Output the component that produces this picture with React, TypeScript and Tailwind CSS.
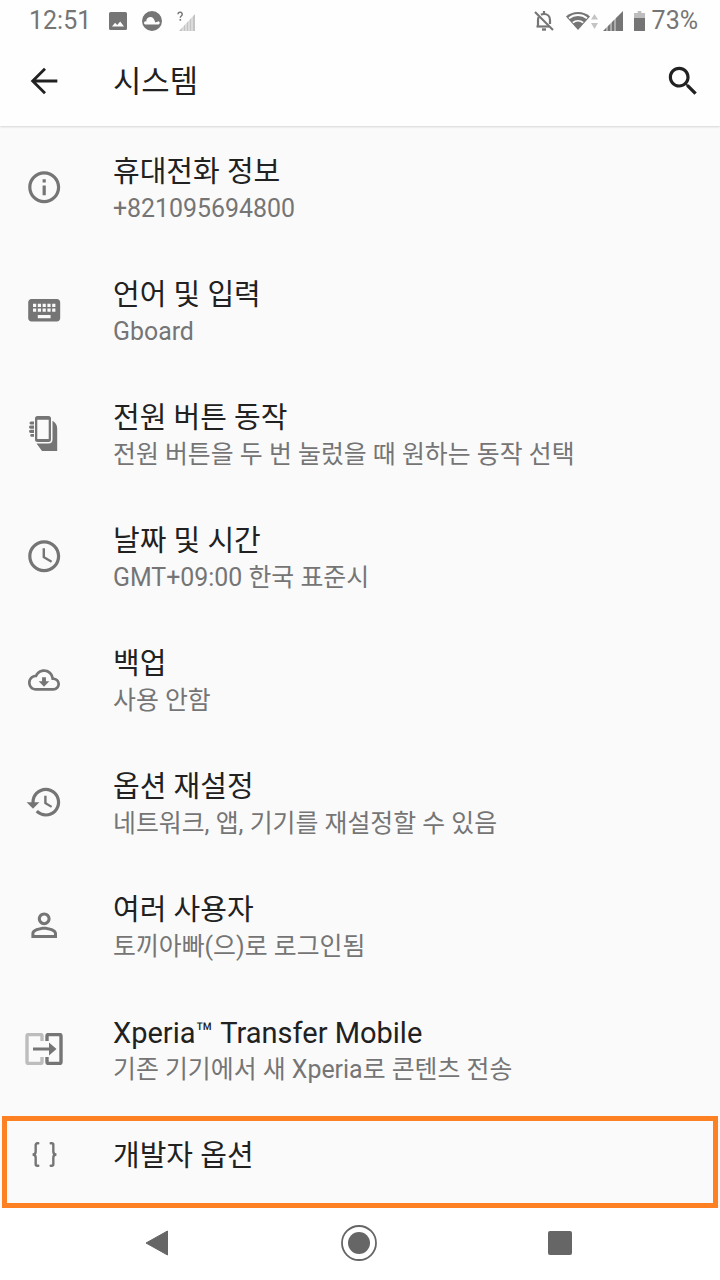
import React from "react";

const FONT = "font-['Roboto','Noto_Sans_CJK_KR',sans-serif]";

function Mi({ d, className = "w-[38.4px] h-[38.4px]" }: { d: string; className?: string }) {
  return (
    <svg viewBox="0 0 24 24" className={className} fill="currentColor">
      <path d={d} />
    </svg>
  );
}

const INFO = "M11 7h2v2h-2zm0 4h2v6h-2zm1-9C6.48 2 2 6.48 2 12s4.48 10 10 10 10-4.48 10-10S17.52 2 12 2zm0 18c-4.41 0-8-3.59-8-8s3.59-8 8-8 8 3.59 8 8-3.59 8-8 8z";
const KEYBOARD = "M20 5H4c-1.1 0-1.99.9-1.99 2L2 17c0 1.1.9 2 2 2h16c1.1 0 2-.9 2-2V7c0-1.1-.9-2-2-2zm-9 3h2v2h-2V8zm0 3h2v2h-2v-2zM8 8h2v2H8V8zm0 3h2v2H8v-2zm-1 2H5v-2h2v2zm0-3H5V8h2v2zm9 7H8v-2h8v2zm0-4h-2v-2h2v2zm0-3h-2V8h2v2zm3 3h-2v-2h2v2zm0-3h-2V8h2v2z";
const CLOCK = "M11.99 2C6.47 2 2 6.48 2 12s4.47 10 9.99 10C17.52 22 22 17.52 22 12S17.52 2 11.99 2zM12 20c-4.42 0-8-3.58-8-8s3.58-8 8-8 8 3.58 8 8-3.58 8-8 8zm.5-13H11v6l5.25 3.15.75-1.23-4.5-2.67V7z";
const CLOUD = "M19.35 10.04C18.67 6.59 15.64 4 12 4 9.11 4 6.6 5.64 5.35 8.04 2.34 8.36 0 10.91 0 14c0 3.31 2.69 6 6 6h13c2.76 0 5-2.24 5-5 0-2.64-2.05-4.78-4.65-4.96zM19 18H6c-2.21 0-4-1.79-4-4 0-2.05 1.53-3.76 3.56-3.97l1.07-.11.5-.95C8.08 7.14 9.94 6 12 6c2.62 0 4.88 1.86 5.39 4.43l.3 1.5 1.53.11c1.56.1 2.78 1.41 2.78 2.96 0 1.65-1.35 3-3 3zm-5.55-8h-2.9v3H8l4 4 4-4h-2.55z";
const HISTORY = "M13 3c-4.97 0-9 4.03-9 9H1l3.89 3.89.07.14L9 12H6c0-3.87 3.13-7 7-7s7 3.13 7 7-3.13 7-7 7c-1.93 0-3.68-.79-4.94-2.06l-1.42 1.42C8.27 19.99 10.51 21 13 21c4.97 0 9-4.03 9-9s-4.03-9-9-9zm-1 5v5l4.28 2.54.72-1.21-3.5-2.08V8H12z";
const PERSON = "M12 5.9c1.16 0 2.1.94 2.1 2.1s-.94 2.1-2.1 2.1S9.9 9.16 9.9 8s.94-2.1 2.1-2.1m0 9c2.97 0 6.1 1.46 6.1 2.1v1.1H5.9V17c0-.64 3.13-2.1 6.1-2.1M12 4C9.79 4 8 5.79 8 8s1.79 4 4 4 4-1.79 4-4-1.79-4-4-4zm0 9c-2.67 0-8 1.34-8 4v3h16v-3c0-2.66-5.33-4-8-4z";

function HandPhone() {
  return (
    <svg viewBox="0 0 30 36" className="w-[30px] h-[36px]" fill="none">
      <path
        fillRule="evenodd"
        d="M8.500 0h11A2.500 2.500 0 0 1 22 2.500v21a2.500 2.500 0 0 1-2.500 2.500h-11A2.500 2.500 0 0 1 6 23.500v-21A2.500 2.500 0 0 1 8.500 0zM8.300 3.700V23h11.400V3.700z"
        fill="currentColor"
      />
      <path
        d="M2 5.500h3v3H2a1.500 1.500 0 0 1 0-3zM1.600 9.500H5v3.200H1.600a1.600 1.600 0 0 1 0-3.200zM1.600 13.700H5v3.200H1.600a1.600 1.600 0 0 1 0-3.200zM2.600 18H5v2.800H2.600a1.400 1.400 0 0 1 0-2.800z"
        fill="currentColor"
      />
      <path d="M23.500 4.800c3 1.600 4.700 4.200 4.700 7.600V35H13L7.500 27.500h12a4 4 0 0 0 4-4z" fill="currentColor" />
    </svg>
  );
}

function Transfer() {
  return (
    <svg viewBox="0 0 38 32" className="w-[38px] h-[32px]" fill="none">
      <path d="M17 8V3a1.500 1.500 0 0 0-1.500-1.500h-12A1.500 1.500 0 0 0 2 3v26a1.500 1.500 0 0 0 1.500 1.500h12A1.500 1.500 0 0 0 17 29v-5" stroke="#bdbdbd" strokeWidth="3.400" />
      <path d="M22 8V3a1.500 1.500 0 0 1 1.500-1.500h11A1.500 1.500 0 0 1 36 3v26a1.500 1.500 0 0 1-1.500 1.500h-11A1.500 1.500 0 0 1 22 29v-5" stroke="currentColor" strokeWidth="3.400" />
      <path d="M8 14.600h16V9.500l7.500 6.500-7.500 6.500v-5H8z" fill="currentColor" />
    </svg>
  );
}

function Braces() {
  return (
    <svg viewBox="0 0 26 24" className="w-[27px] h-[25px]" fill="none" stroke="currentColor" strokeWidth="2.300" strokeLinecap="round">
      <path d="M7 1.200H6a1.500 1.500 0 0 0-1.500 1.500V9c0 1.500-1 3-3 3 2 0 3 1.500 3 3v6.300A1.500 1.500 0 0 0 6 22.800h1" />
      <path d="M19 1.200h1a1.500 1.500 0 0 1 1.500 1.500V9c0 1.500 1 3 3 3-2 0-3 1.500-3 3v6.300A1.500 1.500 0 0 1 20 22.800h-1" />
    </svg>
  );
}

type Item = { icon: React.ReactNode; title: string; sub: string };

const items: Item[] = [
  { icon: <Mi d={INFO} />, title: "휴대전화 정보", sub: "+821095694800" },
  { icon: <Mi d={KEYBOARD} />, title: "언어 및 입력", sub: "Gboard" },
  { icon: <HandPhone />, title: "전원 버튼 동작", sub: "전원 버튼을 두 번 눌렀을 때 원하는 동작 선택" },
  { icon: <Mi d={CLOCK} />, title: "날짜 및 시간", sub: "GMT+09:00 한국 표준시" },
  { icon: <Mi d={CLOUD} className="w-[32px] h-[32px]" />, title: "백업", sub: "사용 안함" },
  { icon: <Mi d={HISTORY} />, title: "옵션 재설정", sub: "네트워크, 앱, 기기를 재설정할 수 있음" },
  { icon: <Mi d={PERSON} />, title: "여러 사용자", sub: "토끼아빠(으)로 로그인됨" },
  { icon: <Transfer />, title: "Xperia™ Transfer Mobile", sub: "기존 기기에서 새 Xperia로 콘텐츠 전송" },
];

function Row({ item }: { item: Item }) {
  return (
    <div className="flex h-[123px] items-center">
      <div className="flex w-[88px] shrink-0 items-center justify-center text-[#757575]">{item.icon}</div>
      <div className="ml-[25px] flex min-w-0 flex-col pt-[5px]">
        <div className="text-[29px] leading-[37px] text-[#212121] whitespace-nowrap">{item.title}</div>
        <div className="text-[24.9px] leading-[36px] text-[#757575] whitespace-nowrap">{item.sub}</div>
      </div>
    </div>
  );
}

function StatusBar() {
  return (
    <div className="flex h-[42px] items-center justify-between pl-[29px] pr-[22px] text-[#757575]">
      <div className="flex items-center">
        <span className="text-[25px] leading-[42px]">12:51</span>
        <svg viewBox="0 0 18 18" className="ml-[18px] w-[18px] h-[18px]" fill="currentColor">
          <path fillRule="evenodd" d="M1.500 0h15A1.500 1.500 0 0 1 18 1.500v15a1.500 1.500 0 0 1-1.500 1.500h-15A1.500 1.500 0 0 1 0 16.500v-15A1.500 1.500 0 0 1 1.500 0zM3 14.500h12l-3.800-5-3 3.600-2.100-2.300z" />
        </svg>
        <svg viewBox="0 0 20 20" className="ml-[15px] w-[20px] h-[20px]" fill="currentColor">
          <path fillRule="evenodd" d="M10 0a10 10 0 1 1 0 20 10 10 0 0 1 0-20zM3 13.500h13.500c1.500-.6 1.600-2.600.3-3.300l-3.500 1.200c-1.200-3.500-2.300-5.500-5.300-5.300-2.400.3-3.900 2.200-3.700 4.400A1.600 1.600 0 0 0 3 13.500z" />
        </svg>
        <svg viewBox="0 0 18 20" className="ml-[15px] w-[18px] h-[20px]" fill="none">
          <path d="M18 3v17H2z" fill="#c4c4c4" />
          <path d="M1 3.200a2.100 2.100 0 1 1 3.300 1.800c-.7.500-1 .9-1 1.700" stroke="#757575" strokeWidth="1.500" />
          <rect x="2.500" y="8" width="1.600" height="1.700" fill="#757575" />
          <path d="M6 13v7M9 10v10M12 7v13M15 4v16" stroke="#fff" strokeWidth="0.800" />
        </svg>
      </div>
      <div className="flex items-center">
        <svg viewBox="0 0 22 22" className="w-[22px] h-[22px]" fill="none" stroke="currentColor" strokeWidth="2.200">
          <path d="M5 16V10c0-1 .2-2 .7-3M8 4.700C8.800 4.200 9.800 4 11 4c3.800 0 6 2.500 6 6v4" />
          <path d="M3.500 16.500h12.500" />
          <path d="M2 2l18 18" />
          <path d="M9 19.500h4" strokeWidth="2.400" />
          <path d="M11 1v3" />
        </svg>
        <svg viewBox="0 0 24 18" className="ml-[11px] w-[24px] h-[18px]">
          <path d="M12 18L0 4.500C3 1.500 7.500 0 12 0s9 1.500 12 4.500z" fill="#757575" />
          <path d="M3 6.300a14 14 0 0 1 18 0M6.800 10.600a8.400 8.400 0 0 1 10.400 0" fill="none" stroke="#fefefe" strokeWidth="1.800" />
        </svg>
        <svg viewBox="0 0 7 18" className="ml-[1px] w-[7px] h-[18px]" fill="#c4c4c4">
          <path d="M3.500 2L7 7.500H0zM3.500 17L0 11h7z" />
        </svg>
        <svg viewBox="0 0 20 20" className="ml-[5px] w-[20px] h-[20px]">
          <path d="M20 0v20H0z" fill="#757575" />
          <path d="M4 14.500v5.500M8 11v9M12 7v13" stroke="#fff" strokeWidth="0.800" />
        </svg>
        <svg viewBox="0 0 12 20" className="ml-[11px] w-[11px] h-[20px]" preserveAspectRatio="none">
          <path d="M4 0h4v2h4v5H0V2h4z" fill="#bdbdbd" />
          <path d="M0 7h12v12.500a.500.500 0 0 1-.5.500H.500a.500.500 0 0 1-.5-.5z" fill="#757575" />
        </svg>
        <span className="ml-[7px] text-[25px] leading-[42px]">73%</span>
      </div>
    </div>
  );
}

export default function App() {
  return (
    <div className={`${FONT} flex h-[1280px] w-[720px] flex-col overflow-hidden bg-[#fafafa]`}>
      <header className="relative z-10 bg-[#fefefe] shadow-[0_1px_2px_rgba(0,0,0,0.15)]">
        <StatusBar />
        <div className="flex h-[84px] items-center pb-[6px]">
          <div className="flex w-[88px] shrink-0 justify-center text-[#212121]">
            <svg viewBox="0 0 24 24" className="w-[40px] h-[40px]" fill="none" stroke="currentColor" strokeWidth="1.700">
              <path d="M20 12H5.500M12.600 4.600 5.200 12l7.400 7.400" />
            </svg>
          </div>
          <div className="ml-[25px] pt-[2px] text-[30.8px] leading-[40px] text-[#212121]">시스템</div>
          <div className="ml-auto mr-[18px] text-[#212121]">
            <Mi d="M15.500 14h-.79l-.28-.27C15.410 12.590 16 11.110 16 9.500 16 5.910 13.090 3 9.500 3S3 5.910 3 9.500 5.910 16 9.500 16c1.610 0 3.090-.59 4.230-1.570l.27.28v.79l5 4.990L20.490 19l-4.990-5zm-6 0C7.010 14 5 11.990 5 9.500S7.010 5 9.500 5 14 7.010 14 9.500 11.990 14 9.500 14z" />
          </div>
        </div>
      </header>
      <main className="flex-1">
        {items.map((it) => (
          <Row key={it.title} item={it} />
        ))}
        <div className="mx-[2px] mt-[6px] flex h-[92px] items-start border-[5px] border-[#fd8023]">
          <div className="ml-[-5px] flex h-[66px] w-[84px] shrink-0 items-center justify-center text-[#757575]">
            <Braces />
          </div>
          <div className="ml-[27px] mt-[17px] text-[29px] leading-[37px] text-[#212121]">개발자 옵션</div>
        </div>
      </main>
      <nav className="flex h-[72px] items-center justify-center bg-white pb-[3px] text-[#666666]">
        <svg viewBox="0 0 24 26" className="ml-[-4px] w-[24px] h-[26px]" fill="currentColor" stroke="currentColor" strokeWidth="1" strokeLinejoin="round">
          <path d="M22.500 1v24L1 13z" />
        </svg>
        <svg viewBox="0 0 36 36" className="ml-[172px] w-[36px] h-[36px]">
          <circle cx="18" cy="18" r="17" fill="none" stroke="currentColor" strokeWidth="1.800" />
          <circle cx="18" cy="18" r="11" fill="currentColor" />
        </svg>
        <div className="ml-[171px] h-[24px] w-[24px] rounded-[2px] bg-[#666666]" />
      </nav>
    </div>
  );
}
